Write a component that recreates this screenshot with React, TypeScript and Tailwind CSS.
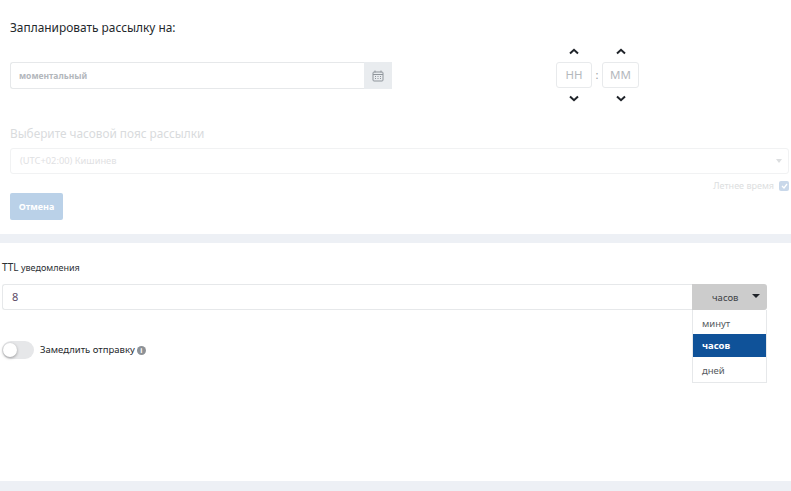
import React from 'react';

const font = { fontFamily: '"Noto Sans", "Open Sans", sans-serif' };

const Chevron = ({ up }: { up?: boolean }) => (
  <svg width="10" height="7" viewBox="0 0 10 7" fill="none">
    <path
      d={up ? 'M1 5.5 L5 1.8 L9 5.5' : 'M1 1.5 L5 5.2 L9 1.5'}
      stroke="#1f2329"
      strokeWidth="2"
    />
  </svg>
);

const CalendarIcon = () => (
  <svg width="12" height="12" viewBox="0 0 12 12" fill="none" stroke="#8f959b" strokeWidth="1">
    <rect x="1" y="2" width="10" height="9" rx="1" />
    <path d="M3 0.5V2.5M9 0.5V2.5M1 4.5H11" />
    <path d="M3 6.5H4M5.5 6.5H6.5M8 6.5H9M3 8.5H4M5.5 8.5H6.5M8 8.5H9" />
  </svg>
);

const TimeBox = ({ text, wide }: { text: string; wide?: boolean }) => (
  <div className="flex flex-col items-center">
    <div className="h-[11px] flex items-center mb-[5px]">
      <Chevron up />
    </div>
    <div
      className={
        wide
          ? 'w-[37px] h-[26px] border border-[#e8eaec] rounded-[3px] flex items-center justify-center text-[11.5px] text-[#b4b8bd]'
          : 'w-[36px] h-[26px] border border-[#e8eaec] rounded-[3px] flex items-center justify-center text-[11.5px] text-[#b4b8bd]'
      }
    >
      {text}
    </div>
    <div className="h-[11px] flex items-center mt-[5px]">
      <Chevron />
    </div>
  </div>
);

export default function App() {
  return (
    <div className="w-[791px] h-[491px] bg-white overflow-hidden flex flex-col" style={font}>
      <section className="h-[234px] pl-[10px] pr-[2px]">
        <h2 className="text-[11.9px] leading-[18px] text-[#24282c] pt-[18px]">Запланировать рассылку на:</h2>
        <div className="flex mt-[10px]">
          <div className="flex mt-[16px] w-[382px] h-[27px]">
            <div className="flex-1 border border-[#e6e8ea] border-r-0 rounded-l-[3px] pl-[8px] pt-[1px] flex items-center text-[8.5px] font-bold text-[#b3b7bc]">
              моментальный
            </div>
            <div className="w-[28px] bg-[#e9ecef] flex items-center justify-center">
              <CalendarIcon />
            </div>
          </div>
          <div className="flex items-start ml-[164px]">
            <TimeBox text="HH" />
            <span className="w-[10px] mt-[21px] text-center text-[11px] text-[#9a9ea3]">:</span>
            <TimeBox text="MM" wide />
          </div>
        </div>
        <div className="text-[11.8px] leading-[18px] text-[#d9dbdd] mt-[20px]">Выберите часовой пояс рассылки</div>
        <div className="mt-[6px] h-[26px] border border-[#f1f2f3] rounded-[3px] pl-[9px] pr-[6px] flex items-center justify-between text-[9.3px] text-[#dfe1e3]">
          <span>(UTC+02:00) Кишинев</span>
          <span className="w-0 h-0 border-x-[3.5px] border-x-transparent border-t-[4px] border-t-[#dcdee0]" />
        </div>
        <div className="flex justify-end items-center gap-[5px] mt-[6px] h-[12px] text-[9px] text-[#dcdee0]">
          <span>Летнее время</span>
          <span className="w-[10px] h-[10px] rounded-[2px] bg-[#c9d8ea] flex items-center justify-center">
            <svg width="7" height="6" viewBox="0 0 7 6" fill="none">
              <path d="M1 3 L3 5 L6 1" stroke="#fff" strokeWidth="1.3" />
            </svg>
          </span>
        </div>
        <button className="block mt-[1px] w-[53px] h-[27px] rounded-[2px] bg-[#bad1e8] text-white text-[9px] font-bold">
          Отмена
        </button>
      </section>
      <div className="h-[9px] bg-[#edf0f5]" />
      <section className="flex-1 relative pl-[2px] pr-[24px]">
        <div className="text-[9px] leading-[14px] text-[#2c3035] mt-[17px]">
          <span className="text-[10px]">TTL</span> уведомления
        </div>
        <div className="flex mt-[9px] h-[26px]">
          <div className="flex-1 border border-[#e6e8ea] border-r-0 rounded-l-[3px] pl-[9px] flex items-center text-[11px] text-[#5c4a66]">
            8
          </div>
          <div className="relative w-[75px] bg-[#cccccc] rounded-tr-[3px] rounded-br-[3px] flex items-center text-[9.5px] text-[#3e4246]">
            <span className="ml-[20px] mt-[2px]">часов</span>
            <span className="absolute right-[7px] top-[10px] w-0 h-0 border-x-[4px] border-x-transparent border-t-[4px] border-t-[#1f2329]" />
            <div className="absolute left-0 top-[26px] w-[75px] h-[73px] bg-white border border-[#e6e8ea] border-t-0 flex flex-col text-[9.5px]">
              <div className="h-[24px] pl-[9px] pt-[4px] flex items-center text-[#55595e]">минут</div>
              <div className="h-[23px] pl-[9px] pt-[2px] flex items-center bg-[#0f5299] text-white font-bold">часов</div>
              <div className="h-[25px] pl-[9px] pt-[3px] flex items-center text-[#55595e]">дней</div>
            </div>
          </div>
        </div>
        <div className="flex items-center mt-[31px] h-[18px]">
          <div className="w-[32px] h-[18px] rounded-full bg-[#e6e7e9] flex items-center pl-[1px]">
            <span className="w-[14px] h-[14px] rounded-full bg-white shadow-[0_1px_3px_rgba(0,0,0,0.35)]" />
          </div>
          <span className="ml-[6px] text-[9.5px] text-[#24282c]">Замедлить отправку</span>
          <span className="ml-[2px] w-[9px] h-[9px] rounded-full bg-[#8d9196] text-white text-[7px] font-bold leading-[9px] text-center">i</span>
        </div>
      </section>
      <div className="h-[10px] bg-[#edf0f5]" />
    </div>
  );
}
